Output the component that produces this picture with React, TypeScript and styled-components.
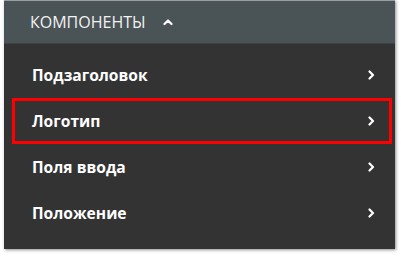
import React from 'react';
import styled, { createGlobalStyle } from 'styled-components';

const GlobalStyle = createGlobalStyle`
  html, body {
    margin: 0;
    padding: 0;
    background: #ffffff;
  }
  body {
    font-family: "Open Sans", "Noto Sans", sans-serif;
  }
`;

interface MenuItem {
  title: string;
  selected?: boolean;
}

const items: MenuItem[] = [
  { title: 'Подзаголовок' },
  { title: 'Логотип', selected: true },
  { title: 'Поля ввода' },
  { title: 'Положение' },
];

const Page = styled.div`
  padding: 0 6px 10px 4px;
`;

const Panel = styled.div`
  width: 391px;
  height: 249px;
  background: #333333;
  box-shadow: 1px 1px 3px rgba(0, 0, 0, 0.45);
  border-top: 1px solid #9a9ea0;
  box-sizing: border-box;
  display: flex;
  flex-direction: column;
`;

const Header = styled.div`
  height: 42px;
  background: #4a5356;
  border-bottom: 1px solid #3c4245;
  display: flex;
  align-items: center;
  gap: 17px;
  padding-left: 26px;
  color: #f2f2f2;
  font-size: 16px;
`;

const List = styled.ul`
  list-style: none;
  margin: 0;
  padding: 8px 3px 0 8px;
  display: flex;
  flex-direction: column;
`;

const Row = styled.li<{ $selected?: boolean }>`
  height: 46px;
  box-sizing: border-box;
  display: flex;
  align-items: center;
  justify-content: space-between;
  padding: 0 13px 0 17px;
  border: 3px solid ${(p) => (p.$selected ? '#ff0000' : 'transparent')};
  color: #ffffff;
  font-size: 15.6px;
  font-weight: 700;
`;

const Chevron: React.FC<{ up?: boolean }> = ({ up }) => (
  <svg width="10" height="10" viewBox="0 0 10 10" aria-hidden>
    <path
      d={up ? 'M1.5 7 L5 3.5 L8.5 7' : 'M3.5 1.5 L7 5 L3.5 8.5'}
      fill="none"
      stroke="#ffffff"
      strokeWidth="2.2"
      strokeLinecap="round"
      strokeLinejoin="round"
    />
  </svg>
);

const App: React.FC = () => (
  <>
    <GlobalStyle />
    <Page>
      <Panel>
        <Header>
          <span>КОМПОНЕНТЫ</span>
          <Chevron up />
        </Header>
        <List>
          {items.map((item) => (
            <Row key={item.title} $selected={item.selected}>
              <span>{item.title}</span>
              <Chevron />
            </Row>
          ))}
        </List>
      </Panel>
    </Page>
  </>
);

export default App;
